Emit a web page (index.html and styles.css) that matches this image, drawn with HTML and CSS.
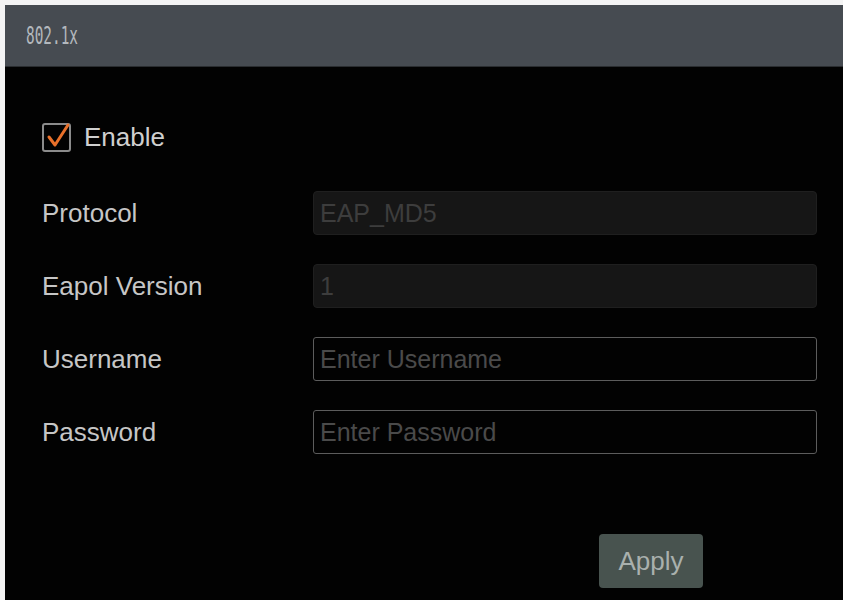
FILE: index.html
```html
<!DOCTYPE html>
<html lang="en">
    <head>
        <title>802.1x</title>
        <link rel="stylesheet" href="styles.css">
    </head>
    <body>
        <div class="Window">
            <div class="TitleBar"><span class="TitleText">802.1x</span></div>

            <div class="Content">
                <label class="EnableRow">
                    <span class="CheckBox">
                        <svg class="CheckMark" width="27" height="27" viewBox="0 0 27 27">
                            <path d="M5 15 L11 23 L24 3" fill="none" stroke="#e8702a" stroke-width="3" stroke-linecap="round" stroke-linejoin="round"/>
                        </svg>
                    </span>
                    <span class="EnableText">Enable</span>
                </label>

                <div class="Form">
                    <div class="Label">Protocol</div>
                    <div class="Field Disabled">EAP_MD5</div>

                    <div class="Label">Eapol Version</div>
                    <div class="Field Disabled">1</div>

                    <div class="Label">Username</div>
                    <input class="Field Input" type="text" placeholder="Enter Username">

                    <div class="Label">Password</div>
                    <input class="Field Input" type="password" placeholder="Enter Password">
                </div>

                <div class="Actions">
                    <button class="ApplyBtn" type="button">Apply</button>
                </div>
            </div>
        </div>
    </body>
</html>
```

FILE: styles.css
```css
html, body{
    margin: 0;
    padding: 0;
    background: #f4f4f4;
}

body{
    padding: 5px 0 0 5px;
    font-family: "Liberation Sans", Arial, sans-serif;
}

.Window{
    background: #020202;
    height: 595px;
}

.TitleBar{
    background: #464b51;
    height: 62px;
    display: flex;
    align-items: center;
    padding-left: 21px;
    border-bottom: 1px solid #2a2d30;
    box-sizing: border-box;
}

.TitleText{
    display: inline-block;
    font-family: "DejaVu Sans Mono", monospace;
    font-size: 24px;
    color: #b3b8bd;
    transform: scaleX(0.6);
    transform-origin: left center;
}

.Content{
    padding: 55px 0 0 37px;
}

.EnableRow{
    display: flex;
    align-items: center;
    gap: 13px;
}

.CheckBox{
    position: relative;
    width: 25px;
    height: 25px;
    border: 2px solid #8b8b8b;
    border-radius: 3px;
}

.CheckMark{
    position: absolute;
    left: 0;
    top: -3px;
}

.EnableText{
    font-size: 26px;
    color: #cfcfcf;
}

.Form{
    display: grid;
    grid-template-columns: 271px 504px;
    row-gap: 29px;
    margin-top: 38px;
    align-items: center;
}

.Label{
    font-family: "Liberation Sans", Arial, sans-serif;
    font-size: 26px;
    color: #c6c6c6;
}

.Field{
    height: 44px;
    box-sizing: border-box;
    border-radius: 4px;
    font-family: "Liberation Sans", Arial, sans-serif;
    font-size: 25px;
    padding-left: 6px;
    display: flex;
    align-items: center;
}

.Disabled{
    background: #161616;
    border: 1px solid #1f1f1f;
    color: #3d3d3d;
}

.Input{
    width: 504px;
    background: #020202;
    border: 1.5px solid #5c5c5c;
    border-radius: 3px;
    color: #aaaaaa;
    outline: none;
}

.Input::placeholder{
    color: #4a4a4a;
}

.Actions{
    margin-top: 80px;
    padding-left: 557px;
}

.ApplyBtn{
    width: 104px;
    height: 54px;
    background: #48534f;
    border: none;
    border-radius: 4px;
    font-family: "Liberation Sans", Arial, sans-serif;
    font-size: 26px;
    color: #a9b0ad;
}
```
